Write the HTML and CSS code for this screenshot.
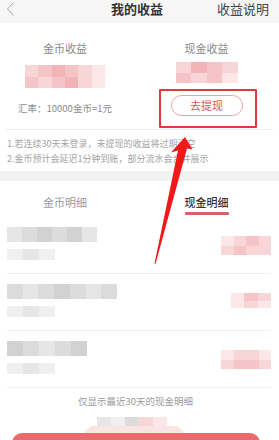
FILE: index.html
```html
<!DOCTYPE html>
<html lang="zh-CN">
<head>
<meta charset="utf-8">
<title>我的收益</title>
<link rel="stylesheet" href="styles.css">
</head>
<body>
<header class="topbar">
  <svg class="back" width="12" height="16" viewBox="0 0 12 16"><path d="M8.5 1.5 L2.5 8 L8.5 14.5" fill="none" stroke="#a8a8a8" stroke-width="1"/></svg>
  <div class="title">我的收益</div>
  <div class="help">收益说明</div>
</header>

<section class="summary">
  <div class="col coin">
    <div class="label">金币收益</div>
    <div class="mosaic m-coin">
      <div class="mrow"><span class="p3"></span><span class="p2"></span><span class="p1"></span><span class="p2"></span><span class="p3"></span><span class="p4"></span></div>
      <div class="mrow"><span class="p2"></span><span class="p3"></span><span class="p2"></span><span class="p1"></span><span class="p3"></span><span class="p4"></span></div>
    </div>
    <div class="rate">汇率：10000金币=1元</div>
  </div>
  <div class="col cash">
    <div class="label">现金收益</div>
    <div class="mosaic m-cash">
      <div class="mrow"><span class="p3"></span><span class="p1"></span><span class="p2"></span><span class="p3"></span></div>
      <div class="mrow"><span class="p2"></span><span class="p3"></span><span class="p2"></span><span class="p4"></span></div>
    </div>
    <button class="withdraw">去提现</button>
  </div>
</section>

<section class="notes">
  <p>1.若连续30天未登录，未提现的收益将过期清空</p>
  <p>2.金币预计会延迟1分钟到账，部分流水会合并展示</p>
</section>

<div class="band"></div>

<nav class="tabs">
  <div class="tab"><span>金币明细</span></div>
  <div class="tab cash-tab"><span class="active">现金明细</span></div>
</nav>

<ul class="list">
  <li class="row">
    <div class="row-left">
      <div class="mosaic main w90"><div class="mrow"><span class="g3"></span><span class="g2"></span><span class="g1"></span><span class="g2"></span><span class="g1"></span><span class="g3"></span></div></div>
      <div class="mosaic sub"><div class="mrow"><span class="g4"></span><span class="g3"></span><span class="g4"></span></div></div>
    </div>
    <div class="mosaic amount"><div class="mrow"><span class="p4"></span><span class="p3"></span><span class="p2"></span><span class="p3"></span></div><div class="mrow"><span class="p3"></span><span class="p2"></span><span class="p3"></span><span class="p3"></span></div></div>
  </li>
  <li class="row">
    <div class="row-left">
      <div class="mosaic main w110"><div class="mrow"><span class="g2"></span><span class="g3"></span><span class="g2"></span><span class="g1"></span><span class="g2"></span><span class="g3"></span><span class="g2"></span></div></div>
      <div class="mosaic sub"><div class="mrow"><span class="g4"></span><span class="g3"></span><span class="g4"></span></div></div>
    </div>
    <div class="mosaic amount short"><div class="mrow"><span class="p4"></span><span class="p2"></span><span class="p3"></span></div><div class="mrow"><span class="p4"></span><span class="p3"></span><span class="p4"></span></div></div>
  </li>
  <li class="row">
    <div class="row-left">
      <div class="mosaic main w80"><div class="mrow"><span class="g1"></span><span class="g2"></span><span class="g3"></span><span class="g2"></span><span class="g1"></span></div></div>
      <div class="mosaic sub"><div class="mrow"><span class="g4"></span><span class="g3"></span><span class="g4"></span></div></div>
    </div>
    <div class="mosaic amount"><div class="mrow"><span class="p4"></span><span class="p3"></span><span class="p3"></span><span class="p4"></span></div><div class="mrow"><span class="p3"></span><span class="p2"></span><span class="p2"></span><span class="p3"></span></div></div>
  </li>
</ul>

<p class="foot">仅显示最近30天的现金明细</p>

<div class="bottom">
  <div class="mosaic b-mosaic"><div class="mrow"><span class="g3"></span><span class="g4"></span><span class="g2"></span><span class="p3"></span><span class="p4"></span></div></div>
  <div class="b-shape"></div>
  <div class="b-btn"></div>
</div>

<div class="mark"></div>
<svg class="arrow" width="279" height="440" viewBox="0 0 279 440">
  <polygon points="185,137 192.5,149.5 187,148.5 155.5,264 154.5,263.5 178,150.5 171,152.5" fill="#f01818"/>
</svg>
</body>
</html>
```

FILE: styles.css
```css
* { box-sizing: border-box; margin: 0; padding: 0; }

html, body { background: #fff; }

body {
  width: 279px;
  height: 440px;
  overflow: hidden;
  position: relative;
  font-family: "Noto Sans CJK SC", "Noto Sans", sans-serif;
  color: #333;
}

/* header */
.topbar {
  height: 23px;
  background: #f6f6f6;
  display: grid;
  grid-template-columns: 1fr auto 1fr;
  align-items: start;
  padding: 1px 10px 0 5px;
}
.back { display: block; margin-top: 0; }
.title {
  font-size: 13px;
  line-height: 16px;
  font-weight: 700;
  color: #333;
}
.help {
  justify-self: end;
  font-size: 13px;
  line-height: 16px;
  color: #444;
}

/* summary */
.summary {
  margin: 0 6px;
  display: grid;
  grid-template-columns: 118px 1fr;
  padding: 18px 0 13px;
  border-bottom: 1px solid #eeeeee;
}
.col { display: flex; flex-direction: column; align-items: center; }
.cash { padding-left: 16px; }
.label { font-size: 11px; line-height: 14px; color: #8a8a8a; }
.rate {
  margin-top: 14px;
  font-size: 9.5px;
  line-height: 12px;
  color: #8a8a8a;
  white-space: nowrap;
}
.withdraw {
  margin-top: 12px;
  width: 72px;
  height: 21px;
  border: 1px solid #eba3a3;
  border-radius: 11px;
  background: #fff;
  color: #d9534f;
  font-family: "Noto Sans CJK SC", sans-serif;
  font-size: 11px;
  line-height: 19px;
}

/* mosaic blur blocks */
.mosaic { display: flex; flex-direction: column; filter: blur(0.7px); }
.mrow { flex: 1; display: flex; }
.mrow span { flex: 1; }
.p1 { background: #f2b4b7; }
.p2 { background: #f5c4c6; }
.p3 { background: #f8d6d7; }
.p4 { background: #fbe7e7; }
.g1 { background: #d2d2d2; }
.g2 { background: #dcdcdc; }
.g3 { background: #e6e6e6; }
.g4 { background: #f0f0f0; }

.m-coin { width: 80px; height: 23px; margin-top: 10px; }
.m-cash { width: 62px; height: 21px; margin-top: 7px; }

/* notes */
.notes { padding: 6px 7px 5px; }
.notes p {
  font-size: 9px;
  line-height: 15px;
  color: #a3a3a3;
  white-space: nowrap;
}

.band { height: 10px; background: #f2f2f2; }

/* tabs */
.tabs {
  display: grid;
  grid-template-columns: 118px 1fr;
  margin: 0 6px;
  padding: 14px 0 2px;
}
.tab { display: flex; justify-content: center; }
.cash-tab { padding-left: 16px; }
.tab span {
  display: block;
  font-size: 11px;
  line-height: 14px;
  color: #999;
}
.tab span::after {
  content: "";
  display: block;
  height: 3px;
  margin-top: 3px;
  border-radius: 1px;
}
.tab .active { color: #333; font-weight: 500; }
.tab .active::after { background: #d9616a; }

/* list */
.list { list-style: none; }
.row {
  height: 57px;
  margin: 0 8px 0 7px;
  padding-top: 10px;
  border-bottom: 1px solid #f0f0f0;
  display: flex;
  justify-content: space-between;
  align-items: flex-start;
}
.row-left { display: flex; flex-direction: column; gap: 7px; }
.main { height: 15px; }
.w90 { width: 90px; }
.w110 { width: 110px; }
.w80 { width: 80px; }
.sub { width: 48px; height: 11px; }
.amount { width: 50px; height: 19px; margin-top: 9px; }
.amount.short { width: 40px; height: 15px; }

/* footer */
.foot {
  margin-top: 6px;
  padding-right: 8px;
  text-align: center;
  font-size: 9.5px;
  line-height: 14px;
  color: #9a9a9a;
}

.bottom { margin-top: 9px; }
.b-mosaic { width: 70px; height: 9px; margin-left: 97px; }
.b-shape {
  width: 102px;
  height: 7px;
  margin-left: 83px;
  background: #fbe4e4;
  clip-path: polygon(8% 0, 92% 0, 100% 100%, 0 100%);
}
.b-btn {
  height: 20px;
  margin: 0 19px 0 12px;
  border-radius: 10px 10px 0 0;
  background: #e96b6b;
}

/* annotations */
.mark {
  position: absolute;
  left: 159px;
  top: 89px;
  width: 98px;
  height: 39px;
  border: 2px solid #e0393e;
  border-radius: 1px;
}
.arrow {
  position: absolute;
  left: 0;
  top: 0;
  pointer-events: none;
}
```
